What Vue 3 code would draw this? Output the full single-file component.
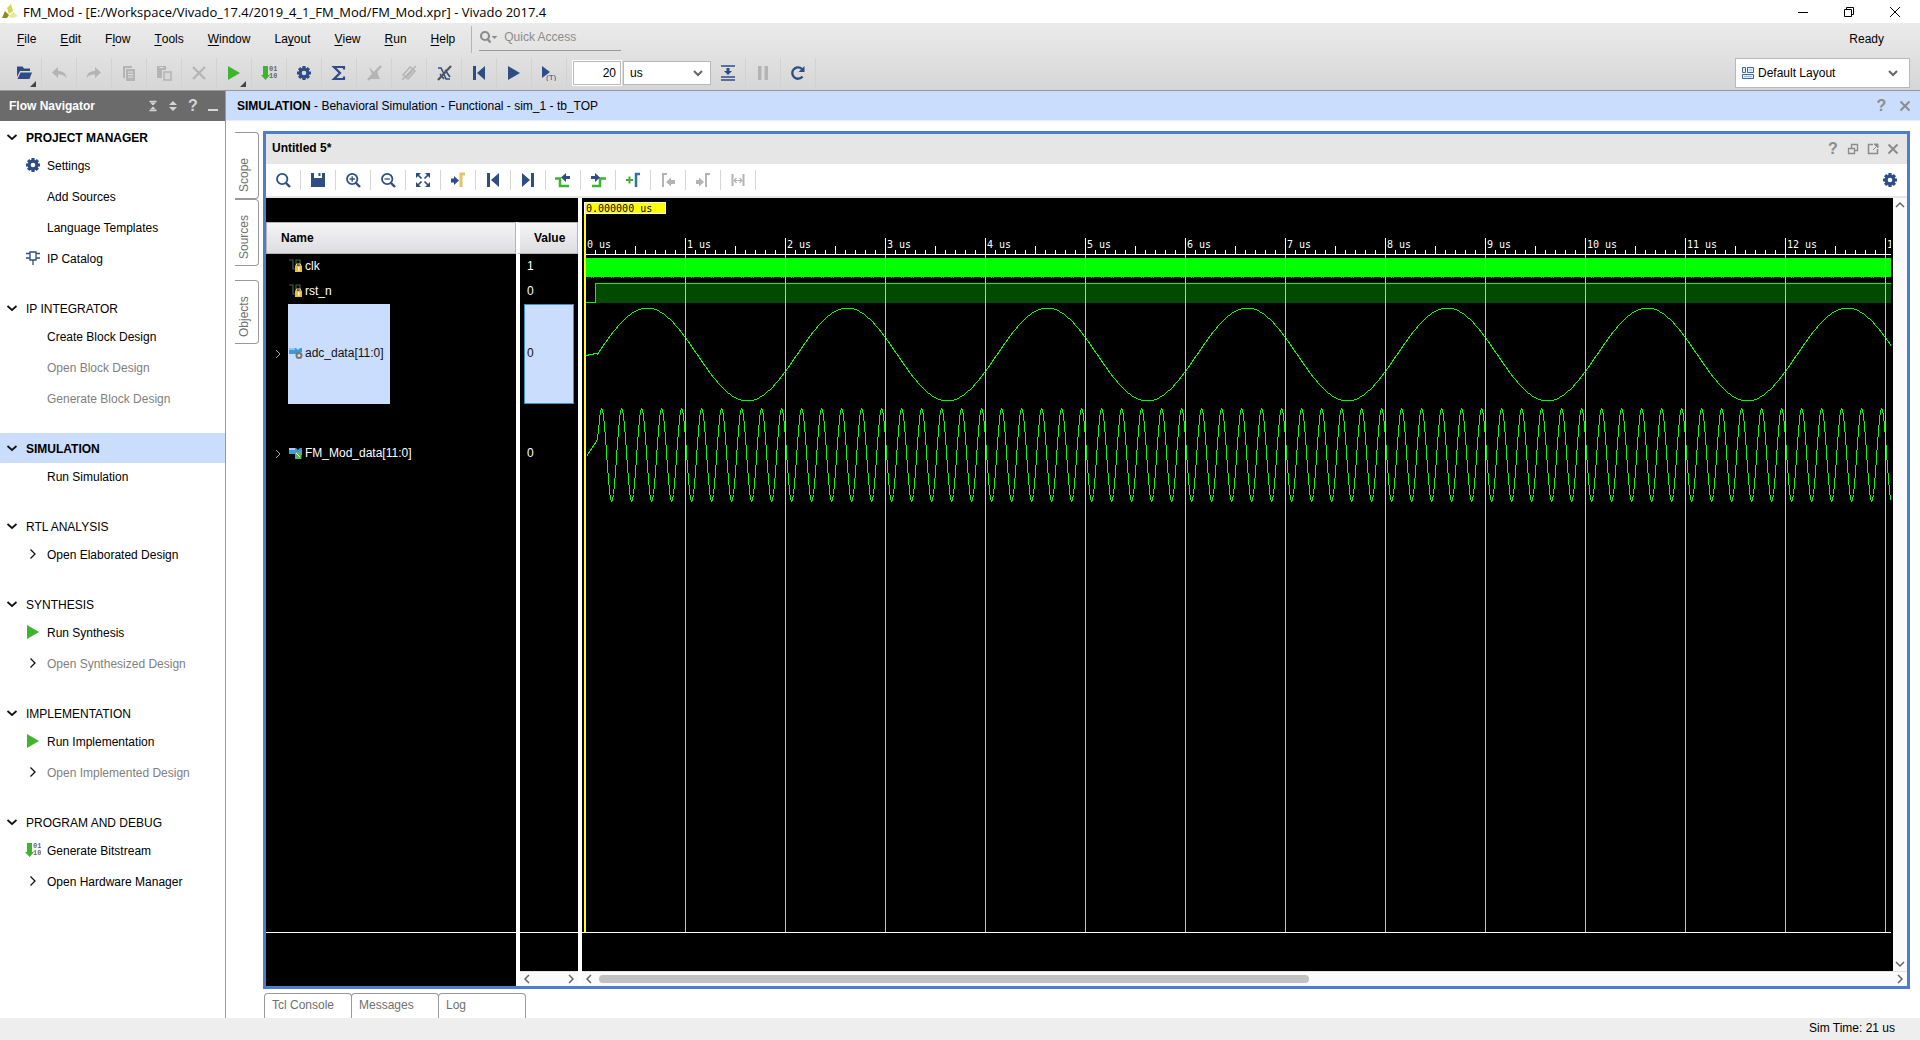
<script setup>
import { ref, computed, onMounted, onBeforeUnmount } from 'vue'

const NAVY = '#2f4d85'
const GREY = '#b4b4b4'
const GREEN = '#3fb42f'

const gearPath = (fill) =>
  `<g fill="none" stroke="${fill}"><circle cx="8" cy="8" r="3.9" stroke-width="3.2"/>` +
  `<g stroke-width="3.2"><path d="M8 1v2.6M8 12.4V15M1 8h2.6M12.4 8H15M3.1 3.1l1.6 1.6M11.3 11.3l1.6 1.6M12.9 3.1l-1.6 1.6M4.7 11.3l-1.6 1.6"/></g></g>`
const lens = (fill, extra = '') =>
  `<g fill="none" stroke="${fill}"><circle cx="7.2" cy="7" r="5.2" stroke-width="1.8"/><path d="M11 11l4 4" stroke-width="2.4"/>${extra}</g>`
const bit = `<path d="M2 1h5v9h2l-4.5 5L0 10h2z" fill="${GREEN}"/><g fill="#666" font-family="Liberation Mono, monospace" font-size="7" font-weight="700"><text x="8" y="6">01</text><text x="8" y="13">10</text></g>`
const waveGlyph = `<path d="M0 1h4v9h3V1h4v9" fill="none" stroke="#3c6438" stroke-width="1.2"/>`

const icons = {
  gear: gearPath(NAVY),
  folder: `<path d="M1 1.500h5.500l1.500 2h6V6H4L1 12z" fill="${NAVY}"/><path d="M4.500 7.500H16L13.500 14H1.500z" fill="${NAVY}"/>`,
  undo: `<path d="M7 2v4c5 0 8 2 8.500 7C13 10 11 9.500 7 9.500V13L1 7.500z" fill="${GREY}"/>`,
  redo: `<path d="M9 2v4C4 6 1 8 .5 13 3 10 5 9.500 9 9.500V13l6-5.500z" fill="${GREY}"/>`,
  copy: `<path d="M2 1h9v2H4v10H2z" fill="${GREY}"/><path d="M5 4h9v12H5z" fill="${GREY}"/><path d="M7 7h5M7 9.500h5M7 12h5" stroke="#e0e0e0"/>`,
  paste: `<path d="M1 1h9v4H6v8H1z" fill="${GREY}"/><path d="M3.500 2.500h4" stroke="#e0e0e0"/><path d="M8 7h7v8H8z" fill="#d8d8d8" stroke="${GREY}" stroke-width="1.500"/>`,
  cross: `<path d="M2 2l12 12M14 2L2 14" stroke="${GREY}" stroke-width="2.200"/>`,
  play: `<path d="M2 1v14l12-7z" fill="${GREEN}"/>`,
  bit,
  sigma: `<path d="M13 4.500V2H3l6 6-6 6h10v-2.500" fill="none" stroke="${NAVY}" stroke-width="2.200"/>`,
  noElab: `<path d="M3 2l5 5 3-2 1 5 2 4H2l4-5z" fill="${GREY}"/><path d="M15 1L2 15" stroke="${GREY}" stroke-width="2.500"/>`,
  noEdit: `<g fill="none" stroke="${GREY}" stroke-width="1.500"><path d="M2 10l7-8 5 4-7 8z"/><path d="M15 1L1 15M5 13l8-9"/></g>`,
  noWave: `<path d="M2 3h3l2 4 3 7h4M4 9l4 5M9 5l5 7" fill="none" stroke="${NAVY}" stroke-width="1.600"/><path d="M15 1L2 15" stroke="#555" stroke-width="2.200"/>`,
  restart: `<path d="M2 1h3v14H2zM14 1v14L6 8z" fill="${NAVY}"/>`,
  toEnd: `<path d="M11 1h3v14h-3zM2 1v14l8-7z" fill="${NAVY}"/>`,
  run: `<path d="M2 1v14l12-7z" fill="${NAVY}"/>`,
  runFor: `<path d="M1 1v12l8-6z" fill="${NAVY}"/><text x="5" y="15" fill="${NAVY}" font-family="Liberation Sans, sans-serif" font-size="8">(T)</text>`,
  step: `<path d="M1 1h14M1 12h14M1 15h14" stroke="${NAVY}" stroke-width="1.400"/><path d="M6.500 3h3v3H12l-4 4-4-4h2.500z" fill="${NAVY}"/>`,
  pause: `<path d="M3 1h3.500v14H3zM9.500 1H13v14H9.500z" fill="${GREY}"/>`,
  reload: `<path d="M12.500 11.500A5.700 5.700 0 1 1 12 4" fill="none" stroke="${NAVY}" stroke-width="2.300"/><path d="M14.500 1v6h-6z" fill="${NAVY}"/>`,
  chip: `<g fill="none" stroke="${NAVY}" stroke-width="1.300"><path d="M5 2h6v8H5zM1 3.500h4M11 3.500h4M1 8h4M11 8h4M8 10v5"/></g>`,
  open: `<path d="M5.500 3.500L10 8l-4.500 4.500" fill="none" stroke="#111" stroke-width="1.300"/>`,
  down: `<path d="M3.500 6L8 10l4.500-4" fill="none" stroke="#111" stroke-width="1.700"/>`,
  search: lens(NAVY),
  zoomIn: lens(NAVY, '<path d="M4.500 7h5.400M7.200 4.300v5.400" stroke-width="1.300"/>'),
  zoomOut: lens(NAVY, '<path d="M4.500 7h5.400" stroke-width="1.300"/>'),
  save: `<path d="M1 1h3v5h8V1h3v14H1z" fill="${NAVY}"/><path d="M8.500 1h2v3h-2z" fill="${NAVY}"/>`,
  fit: `<g fill="${NAVY}"><path d="M1 1h5L1 6zM15 1v5l-5-5zM1 15v-5l5 5zM15 15h-5l5-5z"/></g><path d="M3 3l3.500 3.500M13 3L9.500 6.500M3 13l3.500-3.500M13 13L9.500 9.500" stroke="${NAVY}" stroke-width="1.700"/>`,
  toCursor: `<path d="M1 6.500h3V4l5 4.500-5 4.500v-2.500H1z" fill="${NAVY}"/><path d="M11 15V2h4" fill="none" stroke="#e0c465" stroke-width="3"/>`,
  prevEdge: `<path d="M0 6.500h5V14h9" fill="none" stroke="${GREEN}" stroke-width="2.500"/><path d="M15 4h-4V1L6 5.500l5 4.500V7h4z" fill="${NAVY}"/>`,
  nextEdge: `<path d="M2 14h8V6.500h6" fill="none" stroke="${GREEN}" stroke-width="2.500"/><path d="M1 4h4V1l5 4.500L5 10V7H1z" fill="${NAVY}"/>`,
  addMarker: `<path d="M1 8h7M4.500 4.500v7" stroke="${GREEN}" stroke-width="2"/><path d="M11 15V2h4" fill="none" stroke="#2d74ad" stroke-width="2.500"/>`,
  prevMarker: `<path d="M3 15V2h4" fill="none" stroke="${GREY}" stroke-width="2"/><path d="M15 8h-4V5.500L6 10l5 4.500V12h4z" fill="${GREY}"/>`,
  nextMarker: `<path d="M1 8h3V5.500L9 10l-5 4.500V12H1z" fill="${GREY}"/><path d="M11 15V2h4" fill="none" stroke="${GREY}" stroke-width="2"/>`,
  swap: `<path d="M2.500 2v12M13.500 2v12" stroke="${GREY}" stroke-width="2"/><path d="M4 8.500h8M6.500 6L4 8.500 6.500 11M9.500 6L12 8.500 9.500 11" fill="none" stroke="${GREY}" stroke-width="1.200"/>`,
  close: `<path d="M3.500 3.500l9 9M12.500 3.500l-9 9" stroke="currentColor" stroke-width="2"/>`,
  floatWin: `<g fill="none" stroke="currentColor" stroke-width="1.300"><path d="M3.500 7.500h6v5h-6zM6.500 7V3.500h6v6H10"/></g>`,
  maxWin: `<path d="M8 3.500H3.500v9h9V8" fill="none" stroke="currentColor" stroke-width="1.500"/><path d="M9 3h4v4zM8 9l4-4" fill="currentColor" stroke="currentColor"/>`,
  collapse: `<path d="M4.500 3.500h7M4.500 12.500h7" stroke="currentColor" stroke-width="1.500"/><path d="M5 4.500h6L8 7.500zM5 11.500h6L8 8.500z" fill="currentColor"/>`,
  expand: `<path d="M4 7l4-4 4 4zM4 9h8l-4 4z" fill="currentColor"/>`,
  minimise: `<path d="M3 12h10" stroke="currentColor" stroke-width="2"/>`,
  bitSignal: waveGlyph + `<path d="M6 6.500h7V13H6z" fill="#f3b93a"/><path d="M7.500 6.500V5h4v1.500" fill="none" stroke="#e8d9a8"/><path d="M9 8h1.500v3.500H9z" fill="#fff"/>`,
  busIn: `<path d="M0 2h7l2 2 2-2h2v4L9 8H6H0z" fill="#3a9bd8"/><path d="M0 2h6v2H0z" fill="#8cc8ee"/><circle cx="10" cy="9.500" r="3.500" fill="#777"/><circle cx="10" cy="9.500" r="1.500" fill="#ddd"/>`,
  busOut: `<path d="M0 2h7l2 2 2-2h2v7H8L6 8H0z" fill="#3a9bd8"/><path d="M0 2h6v2H0z" fill="#a5d4f2"/><path d="M6 6h6.500v7H6z" fill="#5fb35f"/><path d="M7 7l4 4" stroke="#e8f6e8"/>`
}

const menus = [
  ['', 'F', 'ile'], ['', 'E', 'dit'], ['F', 'l', 'ow'], ['', 'T', 'ools'], ['', 'W', 'indow'],
  ['La', 'y', 'out'], ['', 'V', 'iew'], ['', 'R', 'un'], ['', 'H', 'elp']
]

const tools = [
  { id: 'folder', label: 'Open project', more: true },
  { id: 'undo', label: 'Undo', off: true },
  { id: 'redo', label: 'Redo', off: true },
  { id: 'copy', label: 'Copy', off: true },
  { id: 'paste', label: 'Paste', off: true },
  { id: 'cross', label: 'Delete', off: true },
  { id: 'play', label: 'Run flow', more: true },
  { id: 'bit', label: 'Generate bitstream' },
  { id: 'gear', label: 'Settings' },
  { id: 'sigma', label: 'Report summary' },
  { id: 'noElab', label: 'Clear elaboration', off: true },
  { id: 'noEdit', label: 'Clear edits', off: true },
  { id: 'noWave', label: 'Close simulation' },
  { id: 'restart', label: 'Restart' },
  { id: 'run', label: 'Run all' },
  { id: 'runFor', label: 'Run for time' }
]
const runTools = [
  { id: 'step', label: 'Step' },
  { id: 'pause', label: 'Break', off: true },
  { id: 'reload', label: 'Relaunch' }
]

const waveTools = [
  ['search', 'Find'], ['save', 'Save'], ['zoomIn', 'Zoom in'], ['zoomOut', 'Zoom out'],
  ['fit', 'Zoom fit'], ['toCursor', 'Go to cursor'], ['restart', 'Go to time 0'],
  ['toEnd', 'Go to last time'], ['prevEdge', 'Previous transition'], ['nextEdge', 'Next transition'],
  ['addMarker', 'Add marker'], ['prevMarker', 'Previous marker', true],
  ['nextMarker', 'Next marker', true], ['swap', 'Swap cursors', true]
]

const sections = [
  { title: 'PROJECT MANAGER', bold: true, items: [
    { text: 'Settings', icon: 'gear' }, { text: 'Add Sources' },
    { text: 'Language Templates' }, { text: 'IP Catalog', icon: 'chip' }] },
  { title: 'IP INTEGRATOR', items: [
    { text: 'Create Block Design' }, { text: 'Open Block Design', off: true },
    { text: 'Generate Block Design', off: true }] },
  { title: 'SIMULATION', bold: true, active: true, items: [{ text: 'Run Simulation' }] },
  { title: 'RTL ANALYSIS', items: [{ text: 'Open Elaborated Design', icon: 'open' }] },
  { title: 'SYNTHESIS', items: [
    { text: 'Run Synthesis', icon: 'play' },
    { text: 'Open Synthesized Design', icon: 'open', off: true }] },
  { title: 'IMPLEMENTATION', items: [
    { text: 'Run Implementation', icon: 'play' },
    { text: 'Open Implemented Design', icon: 'open', off: true }] },
  { title: 'PROGRAM AND DEBUG', items: [
    { text: 'Generate Bitstream', icon: 'bit' },
    { text: 'Open Hardware Manager', icon: 'open' }] }
]

const signals = [
  { name: 'clk', value: '1', icon: 'bitSignal' },
  { name: 'rst_n', value: '0', icon: 'bitSignal' },
  { name: 'adc_data[11:0]', value: '0', icon: 'busIn', tall: true, selected: true },
  { name: 'FM_Mod_data[11:0]', value: '0', icon: 'busOut', tall: true }
]

const runTime = ref('20')
const runUnit = ref('us')
const quick = ref('')

// Time axis: 100 px per microsecond, time zero at x = 3.
const ORIGIN = 3
const PER_US = 100
const plot = ref(null)
const width = ref(1300)
let observer
onMounted(() => {
  observer = new ResizeObserver(() => { width.value = plot.value.clientWidth })
  observer.observe(plot.value)
})
onBeforeUnmount(() => observer.disconnect())

const majors = computed(() => {
  const count = Math.ceil((width.value - 2 - ORIGIN) / PER_US)
  return Array.from({ length: Math.max(count, 1) }, (_, i) => ({ i, x: ORIGIN + i * PER_US }))
})
const ticks = computed(() =>
  Array.from({ length: majors.value.length * 10 }, (_, i) => ({ i, x: ORIGIN + i * 10, h: i % 10 === 5 ? 8 : 4 }))
    .filter((t) => t.i % 10 !== 0))

function trace(lead, from, fn) {
  const pts = [...lead]
  for (let x = from; x < width.value; x += 1) pts.push(`${x + 0.5},${Math.round(fn(x)) + 0.5}`)
  return pts.join(' ')
}
const adcTrace = computed(() => trace(['4,157.5', '9,156.5', '14,155.5'], 15,
  (x) => 156 - 46.5 * Math.sin((2 * Math.PI * (x - 14.7)) / 200)))
const fmTrace = computed(() => trace(['5,257.5', '15,242.5'], 16,
  (x) => 256.5 - 46.5 * Math.cos((2 * Math.PI * (x - 19.2)) / 20)))
</script>

<template>
  <div class="app">
    <header class="titlebar">
      <svg class="logo" viewBox="0 0 16 16">
        <path d="M5 4L9 0l2 7-4 3z" fill="#d3d847" />
        <path d="M0 14l3-7 4 4-2 3z" fill="#8f8c1d" />
        <path d="M6 13l5-5 5 4-5 2z" fill="#e6e89c" />
      </svg>
      <h1>FM_Mod - [E:/Workspace/Vivado_17.4/2019_4_1_FM_Mod/FM_Mod.xpr] - Vivado 2017.4</h1>
      <div class="window-buttons">
        <button type="button" aria-label="Minimize"><svg viewBox="0 0 12 12"><path d="M1 6.500h10" /></svg></button>
        <button type="button" aria-label="Restore"><svg viewBox="0 0 12 12"><path d="M1.500 3.500h7v7h-7zM3.500 3V1.500h7v7H9" /></svg></button>
        <button type="button" aria-label="Close"><svg viewBox="0 0 12 12"><path d="M1 1l10 10M11 1L1 11" /></svg></button>
      </div>
    </header>

    <div class="chrome">
      <div class="menubar">
        <nav class="menus">
          <button v-for="m in menus" :key="m.join('')" type="button">{{ m[0] }}<u>{{ m[1] }}</u>{{ m[2] }}</button>
        </nav>
        <label class="quick">
          <svg viewBox="0 0 20 16" class="quick-icon">
            <circle cx="6" cy="7" r="4" fill="none" stroke="#8c8c8c" stroke-width="2.200" />
            <path d="M8.500 10l3 3.500" stroke="#8c8c8c" stroke-width="2.400" />
            <path d="M12.500 7h6l-3 3z" fill="#8c8c8c" />
          </svg>
          <input v-model="quick" type="text" placeholder="Quick Access" aria-label="Quick Access" />
        </label>
        <span class="ready">Ready</span>
      </div>
      <div class="toolbar">
        <button v-for="t in tools" :key="t.label" type="button" class="tool" :class="{ more: t.more }" :disabled="t.off" :aria-label="t.label">
          <svg class="icon" viewBox="0 0 16 16" v-html="icons[t.id]"></svg>
        </button>
        <input v-model="runTime" class="time" type="text" aria-label="Run time" />
        <span class="combo unit">
          <select v-model="runUnit" aria-label="Time unit"><option>us</option><option>ns</option><option>ms</option></select>
          <svg class="arrow" viewBox="0 0 12 12"><path d="M2 4l4 4 4-4" /></svg>
        </span>
        <button v-for="t in runTools" :key="t.label" type="button" class="tool" :disabled="t.off" :aria-label="t.label">
          <svg class="icon" viewBox="0 0 16 16" v-html="icons[t.id]"></svg>
        </button>
        <span class="combo layout">
          <svg class="layout-icon" viewBox="0 0 12 12">
            <path d="M.5 .5h3v5h-3zM5.500 .5h6v5h-6zM.5 7.500h11v4H.5z" fill="#dff0fb" stroke="#44659a" />
            <path d="M7 3h3M2 9.500h8" stroke="#7cc4ea" />
          </svg>
          <select aria-label="Window layout"><option>Default Layout</option></select>
          <svg class="arrow" viewBox="0 0 12 12"><path d="M2 4l4 4 4-4" /></svg>
        </span>
      </div>
    </div>

    <div class="body">
      <aside class="navigator">
        <div class="nav-head">
          <h2>Flow Navigator</h2>
          <button type="button" aria-label="Collapse all"><svg class="icon" viewBox="0 0 16 16" v-html="icons.collapse"></svg></button>
          <button type="button" aria-label="Expand all"><svg class="icon" viewBox="0 0 16 16" v-html="icons.expand"></svg></button>
          <button type="button" class="help">?</button>
          <button type="button" aria-label="Minimize navigator"><svg class="icon" viewBox="0 0 16 16" v-html="icons.minimise"></svg></button>
        </div>
        <section v-for="s in sections" :key="s.title">
          <button type="button" class="section-title" :class="{ bold: s.bold, active: s.active }">
            <svg class="icon" viewBox="0 0 16 16" v-html="icons.down"></svg>{{ s.title }}
          </button>
          <ul>
            <li v-for="it in s.items" :key="it.text">
              <button type="button" :class="{ off: it.off }">
                <svg class="icon" viewBox="0 0 16 16" v-html="it.icon ? icons[it.icon] : ''"></svg>{{ it.text }}
              </button>
            </li>
          </ul>
        </section>
      </aside>

      <main class="main">
        <div class="view-head">
          <p><b>SIMULATION</b> - Behavioral Simulation - Functional - sim_1 - tb_TOP</p>
          <button type="button" class="help">?</button>
          <button type="button" aria-label="Close simulation view"><svg class="icon" viewBox="0 0 16 16" v-html="icons.close"></svg></button>
        </div>

        <div class="workspace">
          <div class="side-tabs">
            <button type="button">Scope</button>
            <button type="button">Sources</button>
            <button type="button" class="apart">Objects</button>
          </div>

          <div class="center">
            <div class="panel">
              <div class="panel-head">
                <h3>Untitled 5*</h3>
                <button type="button" class="help">?</button>
                <button type="button" aria-label="Float"><svg class="icon" viewBox="0 0 16 16" v-html="icons.floatWin"></svg></button>
                <button type="button" aria-label="Maximize"><svg class="icon" viewBox="0 0 16 16" v-html="icons.maxWin"></svg></button>
                <button type="button" aria-label="Close waveform"><svg class="icon" viewBox="0 0 16 16" v-html="icons.close"></svg></button>
              </div>
              <div class="wave-tools">
                <button v-for="w in waveTools" :key="w[1]" type="button" :disabled="w[2]" :aria-label="w[1]">
                  <svg class="icon" viewBox="0 0 16 16" v-html="icons[w[0]]"></svg>
                </button>
                <button type="button" class="wave-settings" aria-label="Waveform settings"><svg class="icon" viewBox="0 0 16 16" v-html="icons.gear"></svg></button>
              </div>

              <div class="wave">
                <div class="signals">
                  <table>
                    <thead>
                      <tr><th class="name-col">Name</th><th class="value-col">Value</th></tr>
                    </thead>
                    <tbody>
                      <tr v-for="s in signals" :key="s.name" :class="{ tall: s.tall, selected: s.selected }">
                        <td class="name-col">
                          <div class="name-cell">
                            <svg class="expander" viewBox="0 0 8 10"><path v-if="s.tall" d="M2 1l4 4-4 4" /></svg>
                            <span class="signal"><svg class="signal-icon" viewBox="0 0 14 14" v-html="icons[s.icon]"></svg>{{ s.name }}</span>
                          </div>
                        </td>
                        <td class="value-col"><div class="value-cell">{{ s.value }}</div></td>
                      </tr>
                    </tbody>
                  </table>
                  <div class="filler"><div class="filler-value"></div></div>
                  <div class="foot">
                    <div class="foot-value">
                      <div class="value-scroll">
                        <svg viewBox="0 0 8 10"><path d="M6 1L2 5l4 4" /></svg>
                        <svg viewBox="0 0 8 10"><path d="M2 1l4 4-4 4" /></svg>
                      </div>
                    </div>
                  </div>
                </div>

                <div class="plot-area">
                  <div class="plot-row">
                    <div ref="plot" class="plot">
                      <svg class="canvas" shape-rendering="crispEdges">
                        <g fill="#fff">
                          <rect x="3" y="56" width="100%" height="1" />
                          <rect v-for="t in ticks" :key="t.i" :x="t.x" :y="56 - t.h" width="1" :height="t.h" />
                          <rect v-for="m in majors" :key="m.i" :x="m.x" y="40" width="1" height="16" />
                          <text v-for="m in majors" :key="m.i" :x="m.x + 2" y="50" class="mono">{{ m.i }} us</text>
                        </g>
                        <rect x="4" y="60" width="100%" height="19" fill="#0f0" />
                        <line x1="9" y1="79.500" x2="100%" y2="79.500" stroke="#0c0" stroke-dasharray="1 1 1 7" />
                        <rect x="14" y="86" width="100%" height="19" fill="#004b00" />
                        <path d="M4 104.500h9.500V85.500" fill="none" stroke="#0f0" />
                        <rect x="13" y="85" width="100%" height="1" fill="#0f0" />
                        <polyline :points="adcTrace" fill="none" stroke="#0f0" />
                        <polyline :points="fmTrace" fill="none" stroke="#0f0" />
                        <rect v-for="m in majors.slice(1)" :key="m.i" :x="m.x" y="57" width="1" height="100%" fill="#c0c0c0" />
                        <rect x="2" y="16" width="2" height="100%" fill="#ff0" />
                        <rect x="2.500" y="4.500" width="81" height="11" fill="#ff0" stroke="#fff" />
                        <text x="4" y="14" class="mono" fill="#000">0.000000 us</text>
                      </svg>
                    </div>
                    <div class="v-scroll">
                      <svg viewBox="0 0 10 8"><path d="M1 6l4-4 4 4" /></svg>
                      <svg viewBox="0 0 10 8"><path d="M1 2l4 4 4-4" /></svg>
                    </div>
                  </div>
                  <div class="h-scroll">
                    <svg viewBox="0 0 8 10"><path d="M6 1L2 5l4 4" /></svg>
                    <div class="track"><div class="thumb"></div></div>
                    <svg viewBox="0 0 8 10"><path d="M2 1l4 4-4 4" /></svg>
                  </div>
                </div>
              </div>
            </div>

            <div class="bottom-tabs">
              <button type="button">Tcl Console</button>
              <button type="button">Messages</button>
              <button type="button">Log</button>
            </div>
          </div>
        </div>
      </main>
    </div>

    <footer class="status">Sim Time: 21 us</footer>
  </div>
</template>

<style>
body {
  margin: 0;
  background: #fff;
}
</style>

<style scoped>
* {
  box-sizing: border-box;
}
.app {
  display: flex;
  flex-direction: column;
  min-height: 100vh;
  overflow: hidden;
  font: 12px/16px "Liberation Sans", Arial, sans-serif;
  color: #000;
}
button {
  display: flex;
  align-items: center;
  justify-content: center;
  padding: 0;
  border: 0;
  background: none;
  font: inherit;
  color: inherit;
}
input,
select {
  font: inherit;
  color: inherit;
}
h1, h2, h3, p, ul {
  margin: 0;
  padding: 0;
  font-size: 12px;
  list-style: none;
}
.icon {
  flex: none;
  width: 16px;
  height: 16px;
}
.help {
  font-size: 16px;
  font-weight: 700;
}

/* Title bar */
.titlebar {
  display: flex;
  align-items: center;
  height: 23px;
  padding-left: 2px;
}
.logo {
  width: 16px;
  height: 16px;
  margin-right: 5px;
}
.titlebar h1 {
  flex: 1;
  font: 13px/20px "Open Sans", "Noto Sans", sans-serif;
}
.window-buttons {
  display: flex;
  padding-right: 2px;
}
.window-buttons button {
  width: 46px;
  height: 20px;
}
.window-buttons svg {
  width: 12px;
  height: 12px;
  fill: none;
  stroke: #000;
}

/* Menu and tool bars */
.chrome {
  height: 68px;
  border-bottom: 1px solid #999;
  background: linear-gradient(#ebebeb, #d6d6d6);
}
.menubar {
  display: flex;
  align-items: center;
  height: 32px;
  padding-left: 5px;
}
.menus {
  display: flex;
  align-items: center;
  height: 27px;
  padding-right: 4px;
  border-right: 1px solid #b4b4b4;
}
.menus button {
  padding: 0 12px;
  white-space: pre;
}
.menus u {
  text-underline-offset: 2px;
}
.quick {
  display: flex;
  align-items: center;
  width: 142px;
  height: 24px;
  margin: 0 auto 0 7px;
  padding-bottom: 3px;
  border-bottom: 1px solid #999;
}
.quick-icon {
  width: 20px;
  height: 16px;
  margin-right: 5px;
}
.quick input {
  width: 110px;
  padding: 0;
  border: 0;
  background: none;
}
.quick input::placeholder {
  color: #8c8c8c;
}
.ready {
  padding-right: 36px;
}
.toolbar {
  display: flex;
  align-items: center;
  height: 35px;
  padding: 0 10px 0 7px;
}
.tool {
  position: relative;
  width: 35px;
  height: 30px;
  border-right: 1px solid #d2d2d2;
}
.tool.more::after {
  content: "";
  position: absolute;
  right: 5px;
  bottom: 1px;
  border: 3px solid transparent;
  border-right-color: #444;
  border-bottom-color: #444;
}
.time {
  width: 48px;
  height: 24px;
  margin: 0 2px 0 6px;
  padding: 0 4px;
  border: 1px solid #b8b8b8;
  outline: 1px solid #fff;
  background: #fff;
  text-align: right;
}
.combo {
  position: relative;
  display: flex;
  align-items: center;
  border: 1px solid #b8b8b8;
  background: #fff;
}
.combo select {
  width: 100%;
  height: 100%;
  padding: 0 6px;
  border: 0;
  background: none;
  appearance: none;
}
.arrow {
  position: absolute;
  right: 6px;
  width: 12px;
  height: 12px;
  fill: none;
  stroke: #666;
  stroke-width: 2;
  pointer-events: none;
}
.unit {
  width: 88px;
  height: 24px;
}
.layout {
  width: 175px;
  height: 30px;
  margin-left: auto;
  padding-left: 6px;
}
.layout .arrow {
  right: 10px;
}
.layout-icon {
  flex: none;
  width: 12px;
  height: 12px;
}
.layout select {
  padding: 0 4px;
}

/* Flow navigator */
.body {
  flex: 1;
  display: flex;
}
.navigator {
  flex: none;
  width: 226px;
  border-right: 1px solid #999;
}
.nav-head {
  display: flex;
  align-items: center;
  height: 30px;
  margin-bottom: 1px;
  padding: 0 2px 0 9px;
  background: #6b6b6b;
  color: #fff;
}
.nav-head h2 {
  flex: 1;
}
.nav-head button {
  width: 20px;
  color: #d6d6d6;
}
.section-title {
  width: 100%;
  height: 30px;
  padding: 2px 0 0 4px;
  justify-content: flex-start;
  gap: 6px;
}
.section-title.bold {
  font-weight: 700;
}
.section-title.active {
  background: #cbddfd;
}
.navigator section .icon {
  margin-bottom: 2px;
}
.navigator ul {
  display: flex;
  flex-direction: column;
  gap: 15px;
  padding: 6px 0 26px 25px;
}
.navigator li button {
  height: 16px;
  gap: 6px;
}
.navigator li .off {
  color: #808080;
}

/* Simulation view */
.main {
  flex: 1;
  min-width: 0;
  display: flex;
  flex-direction: column;
}
.view-head {
  display: flex;
  align-items: center;
  height: 30px;
  padding: 0 4px 0 11px;
  border-bottom: 1px solid #e6eefa;
  background: #cbddfd;
}
.view-head p {
  flex: 1;
}
.view-head button,
.panel-head button {
  color: #8c8c8c;
}
.view-head button {
  width: 23px;
}
.workspace {
  flex: 1;
  display: flex;
  padding: 10px 10px 0 9px;
}
.side-tabs {
  width: 28px;
  padding: 1px 4px 0 0;
}
.side-tabs button {
  width: 24px;
  height: 67px;
  justify-content: flex-start;
  writing-mode: vertical-rl;
  transform: rotate(180deg);
  color: #707070;
  border: 1px solid #999;
  border-right: 0;
  border-radius: 4px 0 0 4px;
  padding: 6px 0 0 5px;
}
.side-tabs .apart {
  height: 64px;
  margin-top: 14px;
}
.center {
  flex: 1;
  min-width: 0;
  display: flex;
  flex-direction: column;
}
.panel {
  flex: 1;
  display: flex;
  flex-direction: column;
  border: 3px solid #4a7ecf;
}
.panel-head {
  display: flex;
  align-items: center;
  height: 30px;
  padding: 0 4px 0 6px;
  background: #e6e6e6;
}
.panel-head h3 {
  flex: 1;
  padding-bottom: 2px;
}
.panel-head button {
  width: 20px;
}
.wave-tools {
  display: flex;
  align-items: center;
  height: 34px;
  border-bottom: 2px solid #e6e6e6;
}
.wave-tools button {
  width: 35px;
  height: 20px;
  border-right: 1px solid #d6d6d6;
}
.wave-tools .wave-settings {
  margin-left: auto;
  border: 0;
}

/* Waveform */
.wave {
  flex: 1;
  display: flex;
  background: #000;
}
.signals {
  flex: none;
  display: flex;
  flex-direction: column;
  width: 312px;
  padding-top: 24px;
  color: #fff;
}
table {
  width: 100%;
  border-collapse: separate;
  border-spacing: 0;
  table-layout: fixed;
}
th {
  height: 32px;
  padding: 0 0 0 14px;
  border: 1px solid #b4b4b4;
  background: linear-gradient(#f5f5f5, #dddde2);
  background-clip: padding-box;
  color: #000;
  text-align: left;
}
td {
  height: 25px;
  padding: 0;
}
.value-col {
  width: 62px;
  border-left: 4px solid #fff;
}
.tall td {
  height: 100px;
}
.name-cell {
  display: flex;
  align-items: center;
  height: 25px;
  padding-left: 8px;
}
.expander {
  width: 8px;
  height: 10px;
  margin-right: 6px;
  fill: none;
  stroke: #aaa;
  stroke-width: 1;
}
.signal {
  display: flex;
  align-items: center;
  gap: 2px;
  height: 100%;
  padding: 0 6px 2px 1px;
}
.signal-icon {
  width: 14px;
  height: 14px;
}
.value-cell {
  display: flex;
  align-items: center;
  height: 25px;
  margin: 0 4px;
  padding: 0 0 2px 2px;
  border: 1px solid transparent;
}
.tall .name-cell,
.tall .value-cell {
  height: 100px;
}
.selected .signal,
.selected .value-cell {
  background: #cbddfd;
  color: #111;
}
.selected .value-cell {
  border-color: #3c8fd0;
}
.filler,
.foot {
  display: flex;
  justify-content: flex-end;
}
.filler {
  flex: 1;
  border-bottom: 1px solid #fff;
}
.filler-value,
.foot-value {
  width: 62px;
  border-left: 4px solid #fff;
}
.foot {
  height: 53px;
}
.foot-value {
  display: flex;
  flex-direction: column;
  justify-content: flex-end;
}
.value-scroll,
.h-scroll {
  display: flex;
  align-items: center;
  justify-content: space-between;
  height: 15px;
  padding: 0 3px 1px;
  background: #fafafa;
  border-top: 1px solid #e2e2e2;
}
.value-scroll svg,
.h-scroll svg {
  flex: none;
  width: 8px;
  height: 10px;
}
.value-scroll svg,
.h-scroll svg,
.v-scroll svg {
  fill: none;
  stroke: #666;
  stroke-width: 1.5;
}
.plot-area {
  flex: 1;
  min-width: 0;
  display: flex;
  flex-direction: column;
  border-left: 4px solid #fff;
}
.plot-row {
  flex: 1;
  display: flex;
}
.plot {
  flex: 1;
  min-width: 0;
  display: flex;
  flex-direction: column;
  padding: 0 2px 38px 0;
}
.canvas {
  flex: 1;
  display: block;
  width: 100%;
  min-height: 400px;
  border-bottom: 1px solid #fff;
  overflow: hidden;
}
.mono {
  font: 10px "DejaVu Sans Mono", "Liberation Mono", monospace;
}
.v-scroll {
  display: flex;
  flex-direction: column;
  justify-content: space-between;
  align-items: center;
  width: 14px;
  padding: 3px 0;
  background: #fafafa;
}
.v-scroll svg {
  width: 10px;
  height: 8px;
}
.track {
  flex: 1;
  height: 8px;
  margin: 0 6px;
}
.thumb {
  width: 55%;
  height: 8px;
  border-radius: 4px;
  background: #c1c1c1;
}

/* Bottom */
.bottom-tabs {
  display: flex;
  padding: 4px 0 0 1px;
}
.bottom-tabs button {
  width: 88px;
  height: 25px;
  margin-right: -1px;
  padding: 0 0 2px 7px;
  justify-content: flex-start;
  border: 1px solid #999;
  border-bottom: 0;
  border-radius: 4px 4px 0 0;
  color: #707070;
}
.status {
  height: 22px;
  padding: 2px 25px 0 0;
  background: #eee;
  text-align: right;
}
</style>
